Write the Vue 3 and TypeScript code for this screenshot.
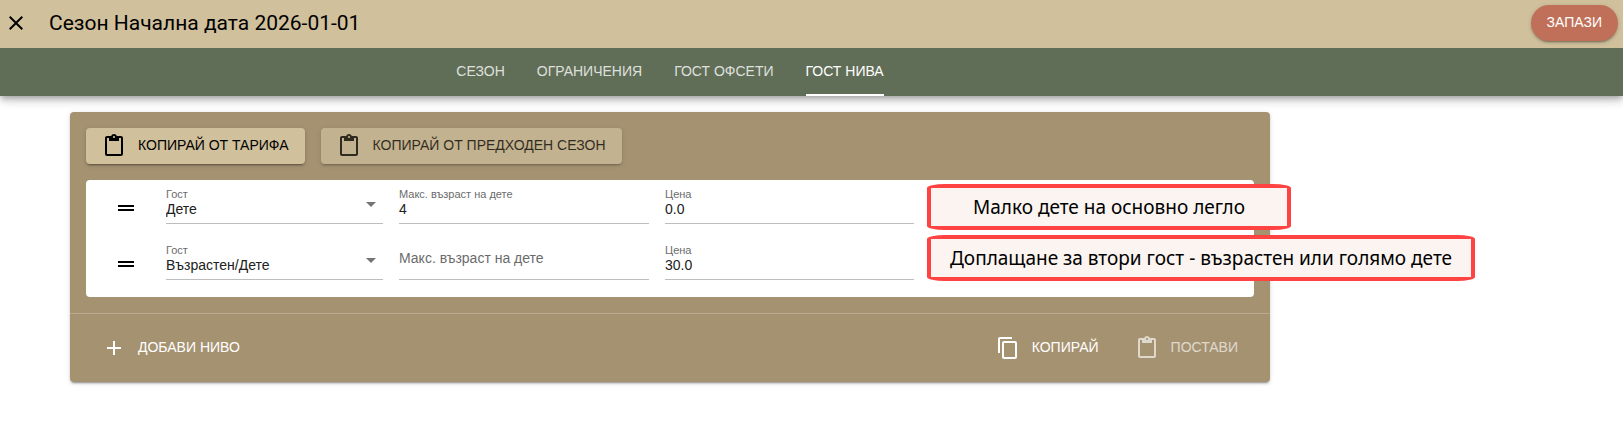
<script setup lang="ts">
import { ref } from 'vue'

interface Level {
  id: number
  guest: string
  maxAge: string
  price: string
}

const tabs = ['Сезон', 'Ограничения', 'Гост офсети', 'Гост нива']
const activeTab = ref('Гост нива')
const guestOptions = ['Дете', 'Възрастен/Дете']
const levels = ref<Level[]>([
  { id: 1, guest: 'Дете', maxAge: '4', price: '0.0' },
  { id: 2, guest: 'Възрастен/Дете', maxAge: '', price: '30.0' },
])

const clipboardPath =
  'M19 2h-4.18C14.4.84 13.3 0 12 0S9.6.84 9.18 2H5c-1.1 0-2 .9-2 2v16c0 1.1.9 2 2 2h14c1.1 0 2-.9 2-2V4c0-1.1-.9-2-2-2zm-7 0c.55 0 1 .45 1 1s-.45 1-1 1-1-.45-1-1 .45-1 1-1zm7 18H5V4h2v3h10V4h2v16z'

function addLevel() {
  levels.value.push({ id: Date.now(), guest: 'Дете', maxAge: '', price: '' })
}
</script>

<template>
  <div class="page">
    <header class="header">
      <div class="titlebar">
        <button class="close" type="button" aria-label="Затвори">
          <svg viewBox="0 0 24 24" width="24" height="24">
            <path d="M19 6.41 17.59 5 12 10.59 6.41 5 5 6.41 10.59 12 5 17.59 6.41 19 12 13.41 17.59 19 19 17.59 13.41 12z" />
          </svg>
        </button>
        <h1 class="title">Сезон Начална дата 2026-01-01</h1>
        <button class="save" type="button">Запази</button>
      </div>
      <nav class="tabbar">
        <div class="tabs">
          <button
            v-for="tab in tabs"
            :key="tab"
            type="button"
            class="tab"
            :class="{ active: tab === activeTab }"
            @click="activeTab = tab"
          >
            <span class="tab-label">{{ tab }}</span>
          </button>
        </div>
      </nav>
    </header>

    <main class="content">
      <section class="card">
        <div class="card-body">
          <div class="copy-actions">
            <button type="button" class="btn raised">
              <svg viewBox="0 0 24 24" width="24" height="24"><path :d="clipboardPath" /></svg>
              <span>Копирай от тарифа</span>
            </button>
            <button type="button" class="btn raised muted" disabled>
              <svg viewBox="0 0 24 24" width="24" height="24"><path :d="clipboardPath" /></svg>
              <span>Копирай от предходен сезон</span>
            </button>
          </div>

          <div class="levels">
            <div v-for="level in levels" :key="level.id" class="level">
              <svg class="handle" viewBox="0 0 24 24" width="24" height="24">
                <path d="M20 9H4v2h16V9zM4 15h16v-2H4v2z" />
              </svg>
              <div class="fields">
                <div class="field">
                  <label :for="'guest-' + level.id">Гост</label>
                  <select :id="'guest-' + level.id" v-model="level.guest">
                    <option v-for="option in guestOptions" :key="option">{{ option }}</option>
                  </select>
                  <svg class="arrow" viewBox="0 0 10 5" width="10" height="5"><path d="M0 0h10L5 5z" /></svg>
                </div>
                <div class="field" :class="{ empty: !level.maxAge }">
                  <label :for="'age-' + level.id">Макс. възраст на дете</label>
                  <input :id="'age-' + level.id" v-model="level.maxAge" type="text" />
                </div>
                <div class="field" :class="{ empty: !level.price }">
                  <label :for="'price-' + level.id">Цена</label>
                  <input :id="'price-' + level.id" v-model="level.price" type="text" />
                </div>
              </div>
            </div>
          </div>
        </div>

        <footer class="card-footer">
          <button type="button" class="btn flat" @click="addLevel">
            <svg viewBox="0 0 24 24" width="24" height="24"><path d="M19 13h-6v6h-2v-6H5v-2h6V5h2v6h6v2z" /></svg>
            <span>Добави ниво</span>
          </button>
          <i class="spacer"></i>
          <button type="button" class="btn flat">
            <svg viewBox="0 0 24 24" width="24" height="24">
              <path d="M16 1H4c-1.1 0-2 .9-2 2v14h2V3h12V1zm3 4H8c-1.1 0-2 .9-2 2v14c0 1.1.9 2 2 2h11c1.1 0 2-.9 2-2V7c0-1.1-.9-2-2-2zm0 16H8V7h11v14z" />
            </svg>
            <span>Копирай</span>
          </button>
          <button type="button" class="btn flat faded" disabled>
            <svg viewBox="0 0 24 24" width="24" height="24"><path :d="clipboardPath" /></svg>
            <span>Постави</span>
          </button>
        </footer>

        <div class="notes">
          <p class="note short">Малко дете на основно легло</p>
          <p class="note">Доплащане за втори гост - възрастен или голямо дете</p>
        </div>
      </section>
    </main>
  </div>
</template>

<style>
body {
  margin: 0;
  background: #fff;
}
</style>

<style scoped>
.page {
  font-family: 'Liberation Sans', Arial, sans-serif;
  font-size: 14px;
  color: #000;
}
button {
  font: inherit;
  border: 0;
  background: none;
  text-transform: uppercase;
  cursor: pointer;
}
svg {
  display: block;
  flex: none;
  fill: currentColor;
}
.header {
  box-shadow: 0 3px 5px -1px rgba(0, 0, 0, 0.2), 0 5px 8px rgba(0, 0, 0, 0.14), 0 1px 14px rgba(0, 0, 0, 0.12);
}
.titlebar {
  display: flex;
  align-items: center;
  box-sizing: border-box;
  height: 48px;
  padding: 0 5px 2px 4px;
  background: #d0c09c;
}
.close {
  padding: 0;
}
.title {
  flex: 1;
  margin: 0 0 0 21px;
  font: 400 21px/28px Roboto, sans-serif;
}
.save {
  height: 36px;
  padding: 0 16px 2px;
  border-radius: 18px;
  background: #c07058;
  color: #fff;
  box-shadow: 0 3px 1px -2px rgba(0, 0, 0, 0.2), 0 2px 2px rgba(0, 0, 0, 0.14), 0 1px 5px rgba(0, 0, 0, 0.12);
}
.tabbar {
  height: 48px;
  padding-left: 70px;
  background: #616e57;
}
.tabs {
  display: flex;
  justify-content: center;
  max-width: 1200px;
  height: 100%;
}
.tab {
  padding: 0 16px;
  color: rgba(255, 255, 255, 0.8);
}
.tab-label {
  display: flex;
  align-items: center;
  box-sizing: border-box;
  height: 48px;
  border-bottom: 2px solid transparent;
}
.tab.active {
  color: #fff;
}
.active .tab-label {
  border-bottom-color: #fff;
}
.content {
  padding: 16px 0 16px 70px;
}
.card {
  position: relative;
  max-width: 1200px;
  border-radius: 4px;
  background: #a59271;
  box-shadow: 0 3px 1px -2px rgba(0, 0, 0, 0.2), 0 2px 2px rgba(0, 0, 0, 0.14), 0 1px 5px rgba(0, 0, 0, 0.12);
}
.card-body {
  padding: 16px;
}
.copy-actions {
  display: flex;
  gap: 16px;
  margin-bottom: 16px;
}
.btn {
  display: flex;
  align-items: center;
  gap: 12px;
  height: 36px;
  padding: 0 16px;
  border-radius: 4px;
}
.btn span {
  padding-bottom: 2px;
}
.raised {
  background: #d0c09c;
  color: #000;
  box-shadow: 0 3px 1px -2px rgba(0, 0, 0, 0.2), 0 2px 2px rgba(0, 0, 0, 0.14), 0 1px 5px rgba(0, 0, 0, 0.12);
}
.muted {
  opacity: 0.7;
}
.levels {
  padding-bottom: 5px;
  border-radius: 4px;
  background: #fff;
}
.level {
  display: flex;
  align-items: center;
  height: 56px;
  padding: 0 16px 0 28px;
}
.fields {
  flex: 1;
  display: grid;
  grid-template-columns: 217fr 250fr 249fr 308fr;
  gap: 16px;
  margin: 0 0 4px 28px;
}
.field {
  position: relative;
  box-sizing: border-box;
  height: 36px;
  border-bottom: 1px solid #bdbdbd;
}
.field label {
  display: block;
  font-size: 11px;
  line-height: 13px;
  color: #6b6b6b;
}
.field input,
.field select {
  display: block;
  width: 100%;
  height: 16px;
  margin: 0;
  padding: 0;
  border: 0;
  outline: 0;
  appearance: none;
  background: none;
  font: inherit;
  line-height: 16px;
  color: #212121;
}
.field.empty label {
  position: absolute;
  top: 4px;
  font-size: 14px;
  line-height: 20px;
}
.arrow {
  position: absolute;
  top: 14px;
  right: 7px;
  color: #757575;
  pointer-events: none;
}
.card-footer {
  display: flex;
  align-items: center;
  gap: 4px;
  padding: 16px;
  border-top: 1px solid #b9aa8f;
}
.flat {
  color: #fff;
}
.faded {
  opacity: 0.65;
}
.spacer {
  flex: 1;
}
.notes {
  position: absolute;
  top: 72px;
  left: 857px;
  display: grid;
  gap: 5px;
}
.note {
  box-sizing: border-box;
  margin: 0;
  padding: 6px 19px;
  border: 4px solid #ff4343;
  border-radius: 18px / 4px;
  background: #fbf4f0;
  font: 400 19px/26px 'Noto Sans', 'Open Sans', sans-serif;
  text-align: center;
  white-space: nowrap;
}
.note.short {
  width: 364px;
}
</style>
